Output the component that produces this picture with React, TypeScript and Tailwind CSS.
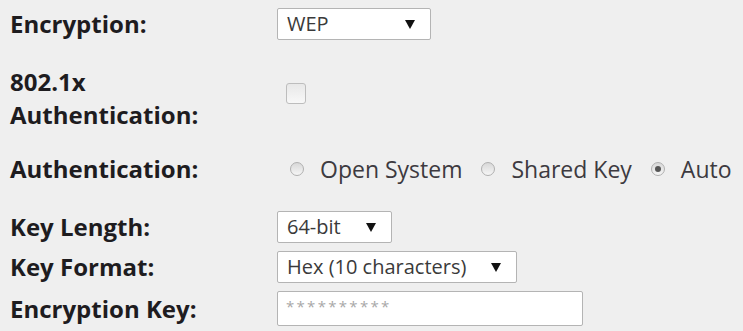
import React from "react";

const Arrow = () => (
  <svg width="10" height="9" viewBox="0 0 10 9" className="shrink-0">
    <path d="M0 0 L10 0 L5 9 Z" fill="#111" />
  </svg>
);

const Select = ({ value, width }: { value: string; width: string }) => (
  <div
    className={`${width} h-[32px] flex items-center justify-between bg-white border border-[#b4b4b4] rounded-[2px] pl-[9px] pr-[15px] text-[20px] text-[#3a3a3a]`}
  >
    <span>{value}</span>
    <Arrow />
  </div>
);

const Radio = ({ label, checked }: { label: string; checked?: boolean }) => (
  <label className="flex items-center">
    <span className="shrink-0 w-[14px] h-[14px] rounded-full border border-[#b0b0b0] bg-gradient-to-b from-[#d8d8d8] to-[#f6f6f6] flex items-center justify-center">
      {checked && <span className="w-[6px] h-[6px] rounded-full bg-[#555]" />}
    </span>
    <span className="ml-[16px] text-[23px] text-[#3d3a40]">{label}</span>
  </label>
);

export default function App() {
  return (
    <div
      className="w-[743px] h-[331px] overflow-hidden bg-[#efefef] pl-[10px] text-[#1e1c1f]"
      style={{ fontFamily: '"Open Sans", sans-serif' }}
    >
      <div className="grid grid-cols-[267px_1fr] items-center">
        {/* Encryption */}
        <div className="h-[48px] flex items-center font-bold text-[24px]">Encryption:</div>
        <div className="h-[48px] flex items-center">
          <Select value="WEP" width="w-[154px]" />
        </div>

        {/* 802.1x */}
        <div className="mt-[17px] font-bold text-[24px] leading-[33px]">
          <div>802.1x</div>
          <div>Authentication:</div>
        </div>
        <div className="mt-[17px] flex items-center pl-[9px] pb-[10px]">
          <span className="w-[20px] h-[21px] rounded-[3px] border border-[#bdbdbd] bg-gradient-to-b from-[#e8e8e8] to-[#f8f8f8]" />
        </div>

        {/* Authentication */}
        <div className="mt-[18px] h-[40px] flex items-center font-bold text-[24px]">Authentication:</div>
        <div className="mt-[18px] h-[40px] flex items-center gap-[19px] pl-[13px]">
          <Radio label="Open System" />
          <Radio label="Shared Key" />
          <Radio label="Auto" checked />
        </div>

        {/* Key Length */}
        <div className="mt-[22px] h-[32px] flex items-center font-bold text-[24px]">Key Length:</div>
        <div className="mt-[22px] h-[32px] flex items-center">
          <Select value="64-bit" width="w-[115px]" />
        </div>

        {/* Key Format */}
        <div className="mt-[8px] h-[32px] flex items-center font-bold text-[24px]">Key Format:</div>
        <div className="mt-[8px] h-[32px] flex items-center">
          <Select value="Hex (10 characters)" width="w-[240px]" />
        </div>

        {/* Encryption Key */}
        <div className="mt-[8px] h-[35px] flex items-center font-bold text-[24px]">Encryption Key:</div>
        <div className="mt-[8px] h-[35px] flex items-center">
          <div className="w-[306px] h-[35px] bg-white border border-[#b4b4b4] rounded-[2px] pl-[8px] pt-[3px] text-[15px] tracking-[2.3px] text-[#a8a8a8]">
            **********
          </div>
        </div>
      </div>
    </div>
  );
}
